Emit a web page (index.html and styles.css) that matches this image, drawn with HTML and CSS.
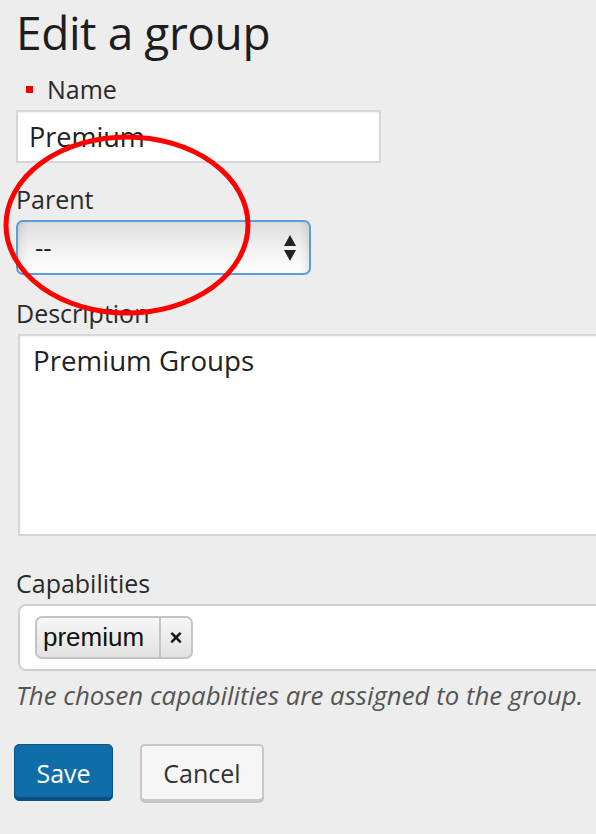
FILE: index.html
```html
<!DOCTYPE html>
<html>
<head>
<meta charset="utf-8">
<link rel="stylesheet" href="styles.css">
</head>
<body>
<div class="page">
  <h1 class="title">Edit a group</h1>
  <div class="label"><span class="req"></span>Name</div>
  <div class="field name-input">Premium</div>
  <div class="label">Parent</div>
  <div class="select">
    <span class="select-value">--</span>
    <svg class="select-arrows" width="14" height="28" viewBox="0 0 14 28"><path d="M7 1 L13 12 L1 12 Z" fill="#222"/><path d="M1 16 L13 16 L7 27 Z" fill="#222"/></svg>
  </div>
  <div class="label">Description</div>
  <div class="textarea">Premium Groups</div>
  <div class="label">Capabilities</div>
  <div class="chosen">
    <span class="token"><span class="token-text">premium</span><span class="token-x">×</span></span>
  </div>
  <p class="help">The chosen capabilities are assigned to the group.</p>
  <div class="actions">
    <button class="btn btn-primary">Save</button>
    <button class="btn btn-secondary">Cancel</button>
  </div>
</div>
<svg class="annotation" width="596" height="834" viewBox="0 0 596 834">
  <ellipse cx="127" cy="225" rx="121" ry="88" fill="none" stroke="#f00" stroke-width="5"/>
</svg>
</body>
</html>
```
FILE: styles.css
```css
html, body {
  margin: 0;
  padding: 0;
}
body {
  background: #ededed;
  font-family: "Open Sans", "DejaVu Sans", sans-serif;
  color: #222;
  overflow: hidden;
  width: 596px;
  height: 834px;
  position: relative;
}
.page {
  padding-left: 16px;
  display: flex;
  flex-direction: column;
  align-items: flex-start;
}
.title {
  margin: 9px 0 0;
  font-size: 46px;
  line-height: 47px;
  letter-spacing: -0.4px;
  font-weight: 400;
  color: #1d1d1d;
}
.label {
  display: flex;
  align-items: center;
  font-size: 25px;
  line-height: 30px;
  color: #2a2a2a;
}
.title + .label { margin-top: 18px; }
.req {
  width: 7px;
  height: 7px;
  background: #e00;
  margin-left: 10px;
  margin-right: 14px;
}
.field {
  box-sizing: border-box;
  margin-top: 6px;
  background: #fff;
  border: 2px solid #d6d6d6;
  box-shadow: inset 0 1px 2px rgba(0,0,0,0.07);
  font-size: 27px;
  color: #222;
}
.name-input {
  width: 365px;
  height: 53px;
  line-height: 49px;
  padding-left: 11px;
}
.name-input + .label { margin-top: 21px; }
.select {
  box-sizing: border-box;
  margin-top: 6px;
  width: 295px;
  height: 55px;
  border: 2px solid #5b9dd9;
  border-radius: 7px;
  background: linear-gradient(#dedede, #f2f2f2 55%, #ffffff);
  box-shadow: inset 8px 0 8px -6px rgba(0,0,0,0.12), inset -8px 0 8px -6px rgba(0,0,0,0.12);
  display: flex;
  align-items: center;
  justify-content: space-between;
  padding: 0 12px 0 17px;
  font-size: 26px;
  color: #222;
}
.select-value { line-height: 51px; }
.select + .label { margin-top: 23px; }
.textarea {
  box-sizing: border-box;
  margin: 6px 0 0 2px;
  width: 620px;
  height: 202px;
  background: #fff;
  border: 2px solid #d6d6d6;
  box-shadow: inset 0 1px 2px rgba(0,0,0,0.07);
  font-size: 27.7px;
  line-height: 36px;
  padding: 6px 0 0 13px;
  color: #222;
}
.textarea + .label { margin-top: 32px; }
.chosen {
  box-sizing: border-box;
  margin: 6px 0 0 2px;
  width: 620px;
  height: 67px;
  background: #fff;
  border: 2px solid #cfcfcf;
  border-radius: 8px;
  padding: 10px 0 0 15px;
  display: flex;
  align-items: flex-start;
}
.token {
  display: flex;
  height: 43px;
  box-sizing: border-box;
  border: 2px solid #c4c4c4;
  border-radius: 7px;
  background: linear-gradient(#f6f6f6, #e2e2e2);
  font-family: "Liberation Sans", Arial, sans-serif;
  color: #111;
}
.token-text {
  width: 122px;
  box-sizing: border-box;
  padding-left: 6px;
  font-size: 26px;
  line-height: 38px;
}
.token-x {
  width: 32px;
  box-sizing: border-box;
  border-left: 2px solid #c4c4c4;
  text-align: center;
  font-size: 22px;
  font-weight: 700;
  line-height: 39px;
}
.help {
  margin: 9px 0 0 0;
  font-size: 25.8px;
  line-height: 30px;
  font-style: italic;
  color: #555;
}
.actions {
  margin-top: 34px;
  display: flex;
  gap: 27px;
  margin-left: -2px;
}
.btn {
  box-sizing: border-box;
  height: 57px;
  border-radius: 5px;
  font-family: "Open Sans", "DejaVu Sans", sans-serif;
  font-size: 25px;
  padding: 0;
  margin: 0;
}
.btn-primary {
  width: 99px;
  background: #0f6da7;
  border: 1px solid #0b5585;
  box-shadow: inset 0 -3px 0 #0b4f7d;
  color: #fff;
}
.btn-secondary {
  width: 124px;
  background: #f6f6f6;
  border: 2px solid #c8c8c8;
  box-shadow: 0 2px 0 #c4c4c4;
  color: #333;
}
.annotation {
  position: absolute;
  left: 0;
  top: 0;
  pointer-events: none;
}
```
